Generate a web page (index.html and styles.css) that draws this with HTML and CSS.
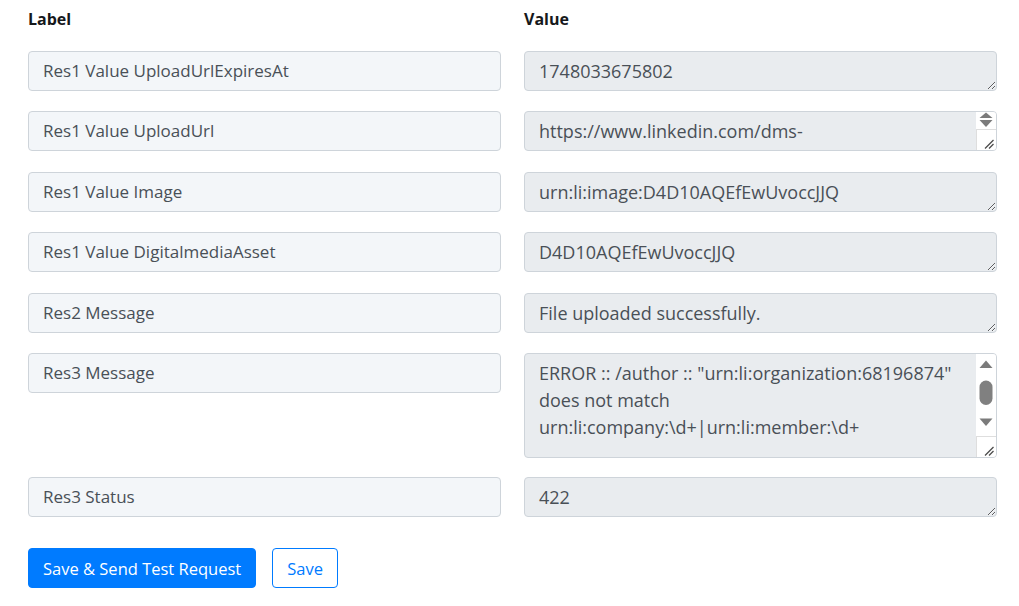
FILE: index.html
```html
<!DOCTYPE html>
<html>
<head>
<meta charset="utf-8">
<link rel="stylesheet" href="styles.css">
</head>
<body>
<div class="form">
  <div class="grid">
    <div class="head">Label</div>
    <div class="head">Value</div>

    <div class="label-box">Res1 Value UploadUrlExpiresAt</div>
    <div class="field"><textarea class="value" disabled>1748033675802</textarea></div>

    <div class="label-box">Res1 Value UploadUrl</div>
    <div class="field">
      <textarea class="value has-sb" disabled>https://www.linkedin.com/dms-uploads/sp/v2/D4D10AQEfEwUvoccJJQ/uploaded-image/B4DZbyw8jF9ud8-?ca=vector_feedshare&amp;cn=uploads&amp;sync=0&amp;v=beta&amp;ut=2kWmhtwkvwPL81</textarea>
      <div class="sb">
        <svg class="sb-track sb-short" viewBox="0 0 20 17" width="20" height="17">
          <polygon points="3.5,6 10,0.5 16.5,6" fill="#7b7b7b"/>
          <polygon points="3.5,8 16.5,8 10,15" fill="#7b7b7b"/>
        </svg>
        <div class="sb-corner">
          <svg viewBox="0 0 20 21" width="20" height="21">
            <line x1="9" y1="19.5" x2="17.5" y2="11" stroke="#4a4a4a" stroke-width="1.2"/>
            <line x1="13" y1="19.5" x2="17.5" y2="15" stroke="#4a4a4a" stroke-width="1.2"/>
          </svg>
        </div>
      </div>
    </div>

    <div class="label-box">Res1 Value Image</div>
    <div class="field"><textarea class="value" disabled>urn:li:image:D4D10AQEfEwUvoccJJQ</textarea></div>

    <div class="label-box">Res1 Value DigitalmediaAsset</div>
    <div class="field"><textarea class="value" disabled>D4D10AQEfEwUvoccJJQ</textarea></div>

    <div class="label-box">Res2 Message</div>
    <div class="field"><textarea class="value" disabled>File uploaded successfully.</textarea></div>

    <div class="label-box">Res3 Message</div>
    <div class="field tall-field">
      <textarea class="value has-sb tall" disabled>ERROR :: /author :: "urn:li:organization:68196874" does not match urn:li:company:\d+|urn:li:member:\d+</textarea>
      <div class="sb">
        <svg class="sb-track sb-long" viewBox="0 0 20 82" width="20" height="82">
          <polygon points="3.5,14 10,6.5 16.5,14" fill="#7b7b7b"/>
          <rect x="3.5" y="26.5" width="13" height="24.5" rx="6.5" ry="6.5" fill="#808080"/>
          <polygon points="3.5,64.5 16.5,64.5 10,72" fill="#7b7b7b"/>
        </svg>
        <div class="sb-corner">
          <svg viewBox="0 0 20 21" width="20" height="21">
            <line x1="9" y1="19.5" x2="17.5" y2="11" stroke="#4a4a4a" stroke-width="1.2"/>
            <line x1="13" y1="19.5" x2="17.5" y2="15" stroke="#4a4a4a" stroke-width="1.2"/>
          </svg>
        </div>
      </div>
    </div>

    <div class="label-box">Res3 Status</div>
    <div class="field"><textarea class="value" disabled>422</textarea></div>
  </div>
  <div class="actions">
    <button class="btn btn-primary">Save &amp; Send Test Request</button>
    <button class="btn btn-outline">Save</button>
  </div>
</div>
</body>
</html>
```
FILE: styles.css
```css
html, body {
  margin: 0;
  padding: 0;
  background: #ffffff;
}
body {
  font-family: "Open Sans", "Noto Sans", sans-serif;
  color: #495057;
}
.form {
  padding: 9px 22px 0 28px;
}
.grid {
  display: grid;
  grid-template-columns: 473px 473px;
  column-gap: 23px;
  row-gap: 20.5px;
  align-items: start;
}
.head {
  font-weight: 700;
  font-size: 16px;
  color: #16181b;
  line-height: 21px;
}
.label-box {
  box-sizing: border-box;
  height: 40px;
  border: 1px solid #ced4da;
  border-radius: 4px;
  background: #f3f6f9;
  padding: 0 14px;
  font-size: 17px;
  line-height: 38px;
  white-space: nowrap;
  overflow: hidden;
}
.field {
  position: relative;
}
.tall-field {
  margin-bottom: -1.5px;
}
.value {
  box-sizing: border-box;
  display: block;
  width: 473px;
  height: 40px;
  margin: 0;
  border: 1px solid #ced4da;
  border-radius: 4px;
  background: #e9ecef;
  padding: 6px 14px;
  font-family: "Open Sans", "Noto Sans", sans-serif;
  font-size: 18px;
  line-height: 27px;
  color: #495057;
  resize: vertical;
  overflow: hidden;
}
.value.has-sb {
  padding-right: 36px;
}
.value.tall {
  height: 105px;
}
.sb {
  position: absolute;
  top: 1px;
  right: 1px;
  bottom: 1px;
  width: 20px;
  background: #ffffff;
  display: flex;
  flex-direction: column;
  border-top-right-radius: 3px;
  border-bottom-right-radius: 3px;
}
.sb-track {
  display: block;
  flex: 1;
}
.sb-corner {
  height: 21px;
  border-top: 1px solid #dedede;
  border-left: 1px solid #dedede;
  box-sizing: border-box;
}
.sb-corner svg {
  display: block;
  margin-left: -1px;
  margin-top: -1px;
}
.actions {
  display: flex;
  gap: 16px;
  margin-top: 31px;
}
.btn {
  box-sizing: border-box;
  height: 40px;
  border-radius: 4px;
  padding: 0 14px;
  font-family: "Open Sans", "Noto Sans", sans-serif;
  font-size: 16.5px;
  cursor: pointer;
}
.btn-primary {
  background: #007bff;
  border: 1px solid #007bff;
  color: #ffffff;
}
.btn-outline {
  background: #ffffff;
  border: 1px solid #007bff;
  color: #007bff;
}
```
